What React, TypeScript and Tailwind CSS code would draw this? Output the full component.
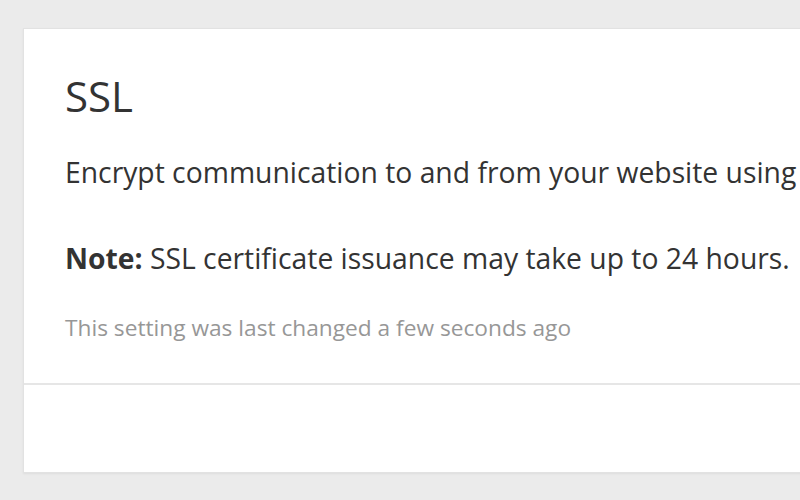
export default function App() {
  return (
    <div
      className="w-[800px] h-[500px] overflow-hidden bg-[#ebebeb] pt-[28px] pl-[23px]"
      style={{ fontFamily: '"Open Sans", sans-serif' }}
    >
      <div className="w-[1000px] bg-white border border-[#e2e2e2] shadow-[0_1px_2px_rgba(0,0,0,0.06)]">
        <div className="pl-[41px] pt-[42px] pb-[40px] border-b-2 border-[#e6e6e6]">
          <h1 className="text-[42px] leading-[50px] text-[#333] font-normal">SSL</h1>
          <p className="mt-[33px] text-[28.3px] leading-[36px] text-[#333] whitespace-nowrap">
            Encrypt communication to and from your website using SSL.
          </p>
          <p className="mt-[50px] text-[28.3px] leading-[36px] text-[#333] whitespace-nowrap">
            <span className="font-bold">Note:</span> SSL certificate issuance may take up to 24 hours.
          </p>
          <p className="mt-[37px] text-[22.7px] leading-[30px] text-[#979797]">
            This setting was last changed a few seconds ago
          </p>
        </div>
        <div className="h-[87px]" />
      </div>
    </div>
  );
}
